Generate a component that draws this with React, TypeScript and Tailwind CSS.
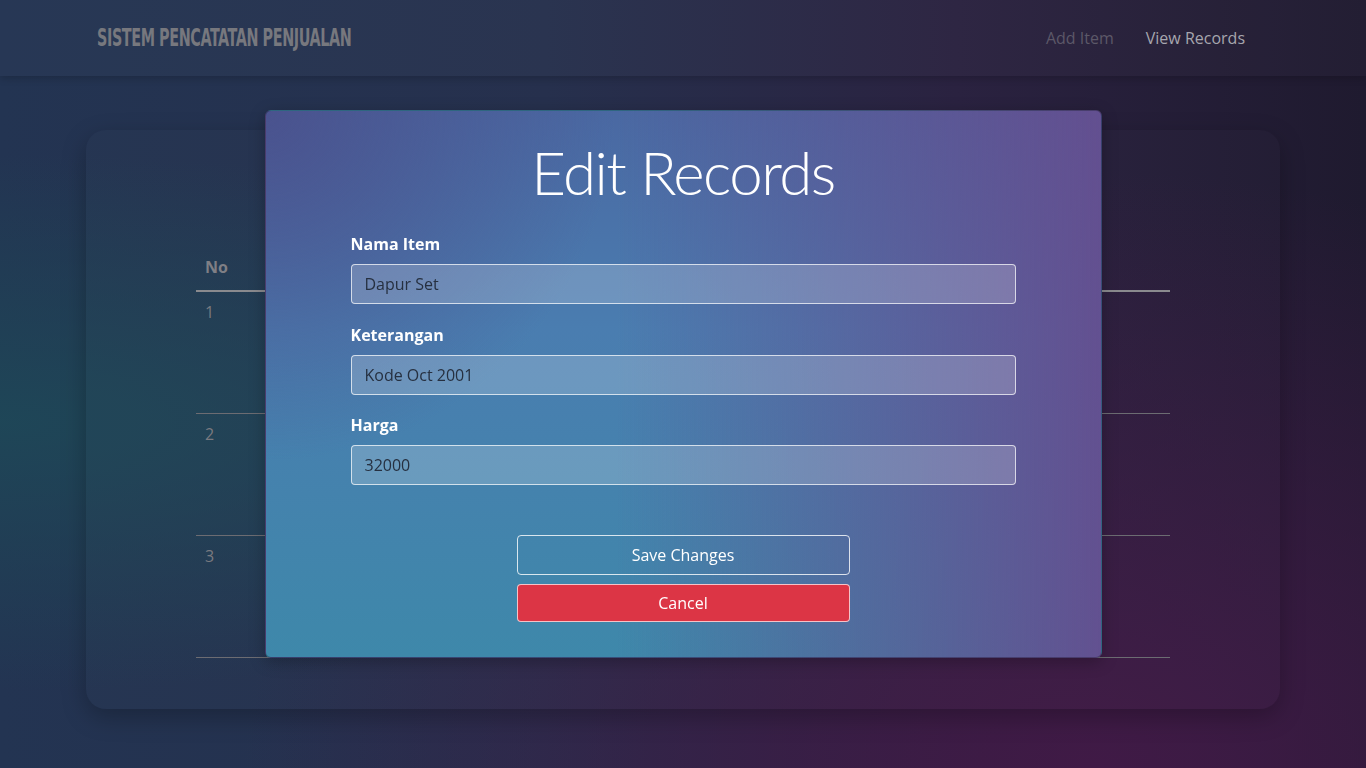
import React from "react";

const rows = [1, 2, 3];

const fields = [
  { label: "Nama Item", value: "Dapur Set" },
  { label: "Keterangan", value: "Kode Oct 2001" },
  { label: "Harga", value: "32000" },
];

export default function App() {
  return (
    <div className="relative min-h-screen w-full overflow-hidden font-['Open_Sans',sans-serif] bg-[radial-gradient(ellipse_at_0%_55%,rgba(30,72,88,0.9)_0%,transparent_45%),radial-gradient(ellipse_at_80%_100%,rgba(64,26,70,1)_0%,transparent_55%),linear-gradient(to_right,#233452_0%,#26304d_40%,#2a2240_70%,#1f1a2f_100%)]">
      {/* navbar */}
      <header className="flex h-[76px] items-center justify-between bg-white/[0.02] pl-[97px] pr-[105px] shadow-[0_2px_8px_rgba(0,0,0,0.2)]">
        <h1 className="origin-left scale-x-[0.665] whitespace-nowrap font-['DejaVu_Sans',sans-serif] text-[24px] font-bold tracking-tight text-[#77787e] font-stretch-condensed">
          SISTEM PENCATATAN PENJUALAN
        </h1>
        <nav className="flex items-center text-[16px]">
          <a className="px-4 text-[#5c5868]">Add Item</a>
          <a className="px-4 text-[#a6a6ae]">View Records</a>
        </nav>
      </header>

      {/* records card */}
      <main className="pt-[54px]">
        <div className="mx-auto w-[1194px] rounded-[20px] bg-white/[0.008] px-[110px] pb-[51px] shadow-[0_8px_24px_rgba(0,0,0,0.25)]">
          <div className="h-[113px]" />
          <table className="w-full border-collapse text-[16px] text-[#7a7a80]">
            <thead>
              <tr>
                <th className="border-b-2 border-[#8a8a8e] px-[9px] pt-3 pb-[11px] text-left font-bold text-[#7f7f85]">
                  No
                </th>
                <th className="w-full border-b-2 border-[#8a8a8e]" />
              </tr>
            </thead>
            <tbody>
              {rows.map((n) => (
                <tr key={n} className="border-b border-[#6c6c72]">
                  <td className="px-[9px] py-2 align-top">
                    <div className="h-[105px]">{n}</div>
                  </td>
                  <td />
                </tr>
              ))}
            </tbody>
          </table>
        </div>
      </main>

      {/* edit modal */}
      <div className="fixed inset-0 flex items-center justify-center">
        <div className="w-[837px] rounded-md border border-black/25 px-[85px] pt-[25px] pb-[35px] shadow-[0_4px_16px_rgba(0,0,0,0.25)] bg-[radial-gradient(circle_at_0%_0%,rgba(74,80,140,0.9)_0%,transparent_35%),linear-gradient(to_right,rgba(100,78,143,0)_42%,rgba(100,78,143,0.95)_100%),linear-gradient(to_bottom,#4a68a2_0%,#4a7db0_40%,#3e88aa_100%)]">
          <h2 className="mb-[24px] text-center font-['Lato',sans-serif] text-[60px] font-light leading-[1.2] tracking-[-1.5px] text-white">
            Edit Records
          </h2>
          <form className="flex flex-col">
            {fields.map((f, i) => (
              <div key={f.label} className={i < fields.length - 1 ? "mb-[18.5px]" : ""}>
                <label className="mb-2 block text-[16px] font-bold leading-6 text-white">{f.label}</label>
                <input
                  readOnly
                  value={f.value}
                  className="block h-10 w-full rounded border border-white/70 bg-white/20 px-[13px] text-[16px] text-[#263040] outline-none"
                />
              </div>
            ))}
            <div className="mt-[50px] flex flex-col items-center gap-[9px]">
              <button
                type="button"
                className="h-10 w-[333px] rounded border border-white/80 text-[16px] text-white"
              >
                Save Changes
              </button>
              <button
                type="button"
                className="h-[38px] w-[333px] rounded border border-white/70 bg-[#dc3545] text-[16px] text-white"
              >
                Cancel
              </button>
            </div>
          </form>
        </div>
      </div>
    </div>
  );
}
